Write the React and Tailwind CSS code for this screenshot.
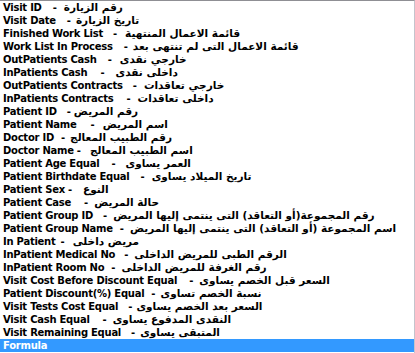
import React from "react";

const rows = [
  ["Visit ID", "ml-[11px]", "ml-[7px]", "رقم الزيارة"],
  ["Visit Date", "ml-[11px]", "ml-[5px]", "تاريخ الزيارة"],
  ["Finished Work List", "ml-[10px]", "ml-[8px]", "قائمة الاعمال المنتهية"],
  ["Work List In Process", "ml-[11px]", "ml-[5px]", "قائمة الاعمال التى لم تنتهى بعد"],
  ["OutPatients Cash", "ml-[11px]", "ml-[8px]", "خارجي نقدى"],
  ["InPatients Cash", "ml-[13px]", "ml-[11px]", "داخلى نقدى"],
  ["OutPatients Contracts", "ml-[10px]", "ml-[7px]", "خارجي تعاقدات"],
  ["InPatients Contracts", "ml-[13px]", "ml-[7px]", "داخلى تعاقدات"],
  ["Patient ID", "ml-[10px]", "ml-[3px]", "رقم المريض"],
  ["Patient Name", "ml-[14px]", "ml-[8px]", "اسم المريض"],
  ["Doctor ID", "ml-[7px]", "ml-[5px]", "رقم الطبيب المعالج"],
  ["Doctor Name", "ml-[3px]", "ml-[9px]", "اسم الطبيب المعالج"],
  ["Patient Age Equal", "ml-[12px]", "ml-[10px]", "العمر يساوى"],
  ["Patient Birthdate Equal", "ml-[11px]", "ml-[7px]", "تاريخ الميلاد يساوى"],
  ["Patient Sex", "ml-[3px]", "ml-[11px]", "النوع"],
  ["Patient Case", "ml-[13px]", "ml-[6px]", "حالة المريض"],
  ["Patient Group ID", "ml-[10px]", "ml-[6px]", "رقم المجموعة(أو التعاقد) التى ينتمى إليها المريض"],
  ["Patient Group Name", "ml-[7px]", "ml-[6px]", "اسم المجموعة (أو التعاقد) التى ينتمى إليها المريض"],
  ["In Patient", "ml-[5px]", "ml-[8px]", "مريض داخلى"],
  ["InPatient Medical No", "ml-[9px]", "ml-[6px]", "الرقم الطبى للمريض الداخلى"],
  ["InPatient Room No", "ml-[7px]", "ml-[6px]", "رقم الغرفة للمريض الداخلى"],
  ["Visit Cost Before Discount Equal", "ml-[12px]", "ml-[6px]", "السعر قبل الخصم يساوى"],
  ["Patient Discount(%) Equal", "ml-[7px]", "ml-[5px]", "نسبة الخصم تساوى"],
  ["Visit Tests Cost Equal", "ml-[10px]", "ml-[4px]", "السعر بعد الخصم يساوى"],
  ["Visit Cash Equal", "ml-[13px]", "ml-[6px]", "النقدى المدفوع يساوى"],
  ["Visit Remaining Equal", "ml-[10px]", "ml-[5px]", "المتبقى يساوى"],
];

export default function App() {
  return (
    <div className="w-[415px] h-[353px] bg-white border-t border-t-[#8f8f94] border-r border-r-[#c4c4cc] overflow-hidden text-[10px] font-bold text-black font-['DejaVu_Sans',sans-serif]">
      <div className="flex flex-col">
        {rows.map(([en, g1, g2, ar], i) => (
          <div key={i} className="h-[13px] leading-[13px] pl-[3px] flex items-center whitespace-pre">
            <span className="tracking-[-0.25px]">{en}</span>
            <span className={g1}>-</span>
            <span dir="rtl" className={g2 + " text-[10.5px]"}>{ar}</span>
          </div>
        ))}
        <div className="h-[13px] leading-[13px] pl-[3px] bg-[#3399ff] text-white tracking-[-0.25px]">Formula</div>
      </div>
    </div>
  );
}
